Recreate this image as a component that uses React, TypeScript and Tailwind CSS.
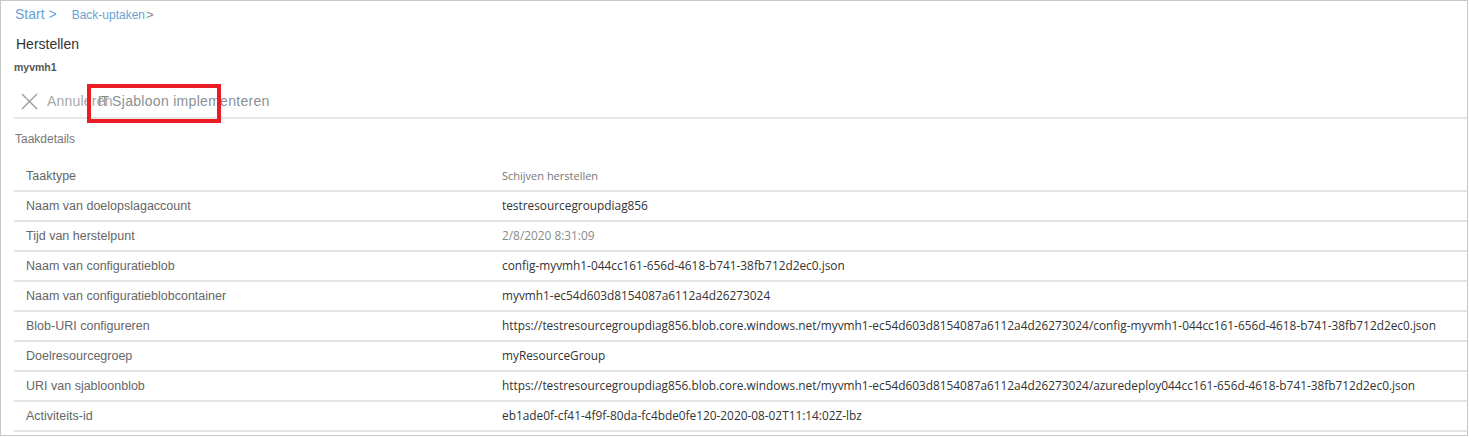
import React from "react";

const rows: { label: string; value: string; tone?: "muted" | "header" }[] = [
  { label: "Taaktype", value: "Schijven herstellen", tone: "header" },
  { label: "Naam van doelopslagaccount", value: "testresourcegroupdiag856" },
  { label: "Tijd van herstelpunt", value: "2/8/2020 8:31:09", tone: "muted" },
  { label: "Naam van configuratieblob", value: "config-myvmh1-044cc161-656d-4618-b741-38fb712d2ec0.json" },
  { label: "Naam van configuratieblobcontainer", value: "myvmh1-ec54d603d8154087a6112a4d26273024" },
  {
    label: "Blob-URI configureren",
    value:
      "https://testresourcegroupdiag856.blob.core.windows.net/myvmh1-ec54d603d8154087a6112a4d26273024/config-myvmh1-044cc161-656d-4618-b741-38fb712d2ec0.json",
  },
  { label: "Doelresourcegroep", value: "myResourceGroup" },
  {
    label: "URI van sjabloonblob",
    value:
      "https://testresourcegroupdiag856.blob.core.windows.net/myvmh1-ec54d603d8154087a6112a4d26273024/azuredeploy044cc161-656d-4618-b741-38fb712d2ec0.json",
  },
  { label: "Activiteits-id", value: "eb1ade0f-cf41-4f9f-80da-fc4bde0fe120-2020-08-02T11:14:02Z-lbz" },
];

export default function App() {
  return (
    <div className="w-[1469px] h-[437px] bg-white overflow-hidden">
      <div
        className="relative w-[1468px] h-[436px] border border-[#c8c8c8] bg-white"
        style={{ fontFamily: '"Liberation Sans", Arial, sans-serif' }}
      >
        {/* breadcrumb */}
        <div className="h-[27px] flex items-center pl-[14px]">
          <span className="text-[14px] text-[#6a9fd6]">Start &gt;</span>
          <span className="ml-[15px] text-[12px] text-[#6a9fd6]">Back-uptaken</span>
          <span className="text-[13px] text-[#888] ml-[1px]">&gt;</span>
        </div>
        {/* title */}
        <div className="h-[32px] flex items-center pl-[15px]">
          <span className="text-[14px] text-[#333]">Herstellen</span>
        </div>
        <div className="h-[16px] flex items-center pl-[13px]">
          <span className="text-[10.5px] font-bold text-[#555]">myvmh1</span>
        </div>
        {/* toolbar */}
        <div className="h-[41px] pt-[9px] flex items-center pl-[20px]">
          <svg width="17" height="17" viewBox="0 0 17 17" className="shrink-0">
            <path d="M1 1 L16 16 M16 1 L1 16" stroke="#9a9a9a" strokeWidth="1.4" fill="none" />
          </svg>
          <span className="ml-[9px] text-[14px] text-[#a8a8a8] whitespace-nowrap tracking-[0.2px]">Annuleren</span>
          <span className="-ml-[15px] flex items-center whitespace-nowrap">
            <span className="text-[14px] text-[#8c8c8c] tracking-[-1px]">IT</span>
            <span className="ml-[4px] text-[14px] text-[#8a8f96] tracking-[0.3px]">Sjabloon implementeren</span>
          </span>
        </div>
        <div className="ml-[13px] h-[2px] bg-[#e6e6e6]" />
        {/* section title */}
        <div className="h-[43px] pb-[3px] flex items-center pl-[14px]">
          <span className="text-[12px] text-[#777]">Taakdetails</span>
        </div>
        {/* table */}
        <div className="ml-[13px]">
          {rows.map((r) => (
            <div key={r.label} className="h-[30px] border-b-2 border-[#e4e4e4] grid grid-cols-[476px_1fr] items-center pl-[12px]">
              <span className="text-[12.5px] text-[#666] whitespace-nowrap">{r.label}</span>
              <span
                className={
                  "whitespace-nowrap " +
                  (r.tone === "header"
                    ? "text-[11px] text-[#777]"
                    : r.tone === "muted"
                    ? "text-[11.85px] text-[#8a8a8a]"
                    : "text-[11.85px] text-[#333]")
                }
                style={{ fontFamily: '"Open Sans", "Noto Sans", sans-serif' }}
              >
                {r.value}
              </span>
            </div>
          ))}
        </div>
        {/* annotation highlight */}
        <div className="absolute left-[86px] top-[83px] w-[134px] h-[39px] border-4 border-[#ec1c24] pointer-events-none" />
      </div>
    </div>
  );
}
